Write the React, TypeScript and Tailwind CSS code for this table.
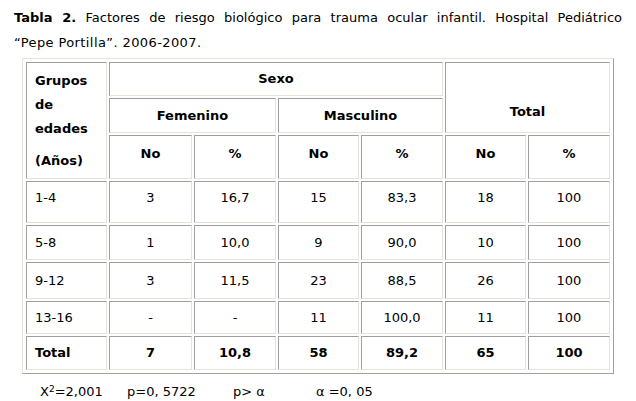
const light = "border-t-[#9f9f9f] border-l-[#9f9f9f] border-b-[#e4e3dc] border-r-[#e4e3dc]"
const cell = `border border-solid ${light} text-center align-middle p-0`

type Row = { label: string; cells: string[]; h: string; pad?: string; bold?: boolean }

const rows: Row[] = [
  { label: "1-4", cells: ["3", "16,7", "15", "83,3", "18", "100"], h: "h-[42px]", pad: "pb-[9px]" },
  { label: "5-8", cells: ["1", "10,0", "9", "90,0", "10", "100"], h: "h-[35px]" },
  { label: "9-12", cells: ["3", "11,5", "23", "88,5", "26", "100"], h: "h-[37px]" },
  { label: "13-16", cells: ["-", "-", "11", "100,0", "11", "100"], h: "h-[33px]" },
  { label: "Total", cells: ["7", "10,8", "58", "89,2", "65", "100"], h: "h-[34px]", bold: true },
]

export default function App() {
  return (
    <div className="w-[636px] h-[401px] bg-white text-black font-['DejaVu_Sans',Verdana,sans-serif] text-[13px] overflow-hidden">
      <div className="px-[14px] pt-[5px] leading-[25px]">
        <p className="text-justify [text-align-last:justify]">
          <b>Tabla 2.</b> Factores de riesgo biológico para trauma ocular infantil. Hospital Pediátrico
        </p>
        <p className="tracking-[0.4px]">“Pepe Portilla”. 2006-2007.</p>
      </div>
      <table className="mx-auto mt-[3px] w-[591px] table-fixed border-separate border-spacing-[2px] p-px border border-solid border-t-[#e4e3dc] border-l-[#e4e3dc] border-b-[#a0a0a0] border-r-[#a0a0a0]">
        <colgroup>
          <col className="w-[81px]" />
          <col className="w-[83px]" />
          <col className="w-[82px]" />
          <col className="w-[81px]" />
          <col className="w-[82px]" />
          <col className="w-[81px]" />
          <col className="w-[82px]" />
        </colgroup>
        <tbody>
          <tr className="h-[34px] font-bold">
            <td rowSpan={3} className={`${cell} text-left pl-[8px]`}>
              <div className="leading-[24px]">Grupos<br />de<br />edades</div>
              <div className="leading-[24px] mt-[8px]">(Años)</div>
            </td>
            <td colSpan={4} className={cell}>Sexo</td>
            <td colSpan={2} rowSpan={2} className={`${cell} pt-[28px]`}>Total</td>
          </tr>
          <tr className="h-[35px] font-bold">
            <td colSpan={2} className={cell}>Femenino</td>
            <td colSpan={2} className={cell}>Masculino</td>
          </tr>
          <tr className="h-[44px] font-bold">
            {["No", "%", "No", "%", "No", "%"].map((t, i) => (
              <td key={i} className={`${cell} pb-[6px]`}>{t}</td>
            ))}
          </tr>
          {rows.map((r) => (
            <tr key={r.label} className={`${r.h} ${r.bold ? "font-bold" : ""}`}>
              <td className={`${cell} text-left pl-[8px] ${r.pad ?? ""}`}>{r.label}</td>
              {r.cells.map((c, i) => (
                <td key={i} className={`${cell} ${r.pad ?? ""}`}>{c}</td>
              ))}
            </tr>
          ))}
        </tbody>
      </table>
      <div className="flex pl-[40px] mt-[9px] leading-[18px]">
        <span className="w-[87px]">X<sup className="text-[9px]">2</sup>=2,001</span>
        <span className="w-[106px]">p=0, 5722</span>
        <span className="w-[83px]">p&gt; α</span>
        <span>α =0, 05</span>
      </div>
    </div>
  )
}
